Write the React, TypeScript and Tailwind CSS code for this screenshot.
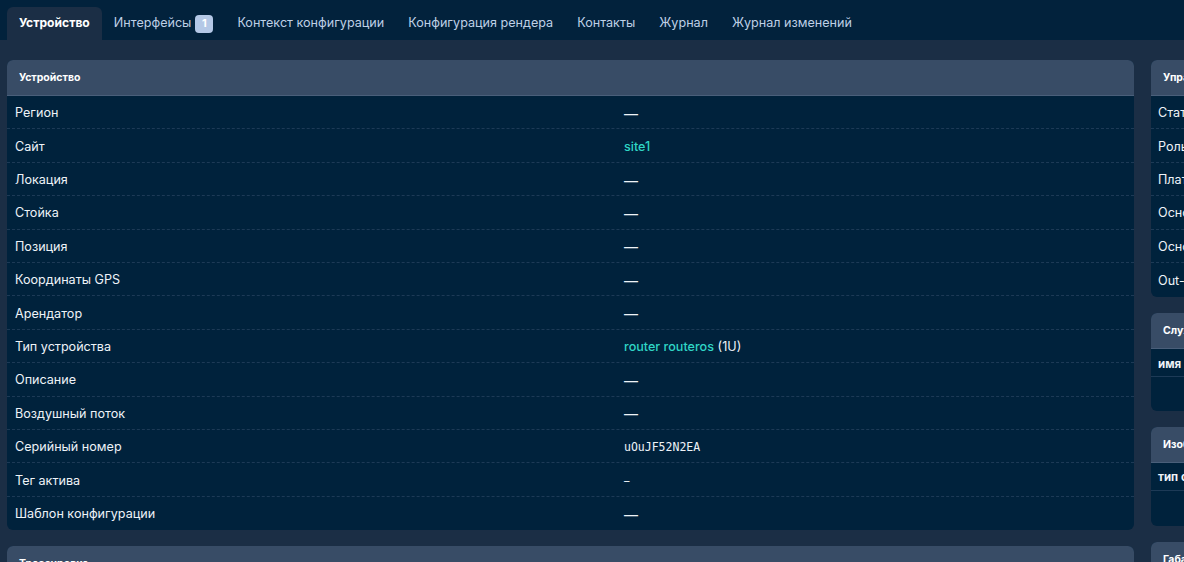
import React from 'react';

// Device detail page — tab strip + attribute tables.

const TABS: { label: string; badge?: number }[] = [
  { label: 'Устройство' },
  { label: 'Интерфейсы', badge: 1 },
  { label: 'Контекст конфигурации' },
  { label: 'Конфигурация рендера' },
  { label: 'Контакты' },
  { label: 'Журнал' },
  { label: 'Журнал изменений' },
];

type Val = { kind: 'dash' } | { kind: 'link'; text: string; suffix?: string } | { kind: 'mono'; text: string } | { kind: 'small' };

const DEVICE_ROWS: { label: string; value: Val }[] = [
  { label: 'Регион', value: { kind: 'dash' } },
  { label: 'Сайт', value: { kind: 'link', text: 'site1' } },
  { label: 'Локация', value: { kind: 'dash' } },
  { label: 'Стойка', value: { kind: 'dash' } },
  { label: 'Позиция', value: { kind: 'dash' } },
  { label: 'Координаты GPS', value: { kind: 'dash' } },
  { label: 'Арендатор', value: { kind: 'dash' } },
  { label: 'Тип устройства', value: { kind: 'link', text: 'router routeros', suffix: '(1U)' } },
  { label: 'Описание', value: { kind: 'dash' } },
  { label: 'Воздушный поток', value: { kind: 'dash' } },
  { label: 'Серийный номер', value: { kind: 'mono', text: 'uOuJF52N2EA' } },
  { label: 'Тег актива', value: { kind: 'small' } },
  { label: 'Шаблон конфигурации', value: { kind: 'dash' } },
];

const MGMT_ROWS = ['Статус', 'Роль', 'Платформа', 'Основной IPv4', 'Основной IPv6', 'Out-of-band IP'];

function Value({ v }: { v: Val }) {
  if (v.kind === 'dash') return <span className="text-[14px] text-[#eef3f8]">—</span>;
  if (v.kind === 'small') return <span className="text-[11px] text-[#eef3f8]">–</span>;
  if (v.kind === 'mono')
    return <span className="font-['DejaVu_Sans_Mono',monospace] text-[11.5px] text-[#eef3f8]">{v.text}</span>;
  return (
    <span>
      <span className="font-medium text-[#2fd6c6]">{v.text}</span>
      {v.suffix && <span className="text-[#eef3f8]"> {v.suffix}</span>}
    </span>
  );
}

function CardHeader({ title }: { title: string }) {
  return (
    <div className="flex h-9 items-center rounded-t-md border-b border-[#4a5f7a] bg-[#384c66] px-3 text-[10.5px] font-bold text-white">
      {title}
    </div>
  );
}

export default function App() {
  return (
    <div className="h-[562px] w-[1184px] overflow-hidden bg-[#1b2e45] font-['Inter',sans-serif] text-[12.6px] text-[#eef3f8]">
      <nav className="flex h-10 items-end bg-[#02223c] pl-[7px]">
        {TABS.map((t, i) => (
          <div
            key={t.label}
            className={
              i === 0
                ? 'flex h-[33px] items-center rounded-t-md bg-[#1b2e45] px-3 text-[12.1px] font-bold text-white'
                : 'flex h-[33px] items-center px-3 text-[#bfd0e6]'
            }
          >
            {t.label}
            {t.badge !== undefined && (
              <span className="ml-[4px] flex h-[18px] w-[18px] items-center justify-center rounded bg-[#b4c8e6] text-[11px] font-bold text-white">
                {t.badge}
              </span>
            )}
          </div>
        ))}
      </nav>

      <div className="flex gap-[17px] pl-[7px] pt-5">
        <div className="flex w-[1127px] shrink-0 flex-col gap-4">
          <section className="rounded-md bg-[#00223c]">
            <CardHeader title="Устройство" />
            {DEVICE_ROWS.map((r, i) => (
              <div
                key={r.label}
                className={
                  'flex h-[33.4px] items-center pt-[3px] ' +
                  (i < DEVICE_ROWS.length - 1 ? 'border-b border-dashed border-[#1d3a56]' : '')
                }
              >
                <div className="w-[617px] pl-2">{r.label}</div>
                <div>
                  <Value v={r.value} />
                </div>
              </div>
            ))}
          </section>
          <section className="rounded-md bg-[#00223c]">
            <CardHeader title="Трассировка" />
          </section>
        </div>

        <div className="flex w-[400px] shrink-0 flex-col gap-4">
          <section className="rounded-md bg-[#00223c] pb-[1px]">
            <CardHeader title="Управление" />
            {MGMT_ROWS.map((label, i) => (
              <div
                key={label}
                className={
                  'flex h-[33.4px] items-center pl-[7px] pt-[3px] ' +
                  (i < MGMT_ROWS.length - 1 ? 'border-b border-dashed border-[#1d3a56]' : '')
                }
              >
                {label}
              </div>
            ))}
          </section>
          <section className="rounded-md bg-[#00223c]">
            <CardHeader title="Службы" />
            <div className="flex h-7 items-center border-b border-[#1d3a56] pl-[7px] pt-[3px] text-[11.5px] font-bold">имя</div>
            <div className="h-[34px]" />
          </section>
          <section className="rounded-md bg-[#00223c]">
            <CardHeader title="Изображения" />
            <div className="flex h-7 items-center border-b border-[#1d3a56] pl-[7px] pt-[1px] text-[11.5px] font-bold">тип слота</div>
            <div className="h-[35px]" />
          </section>
          <section className="rounded-md bg-[#00223c]">
            <CardHeader title="Габариты" />
          </section>
        </div>
      </div>
    </div>
  );
}
